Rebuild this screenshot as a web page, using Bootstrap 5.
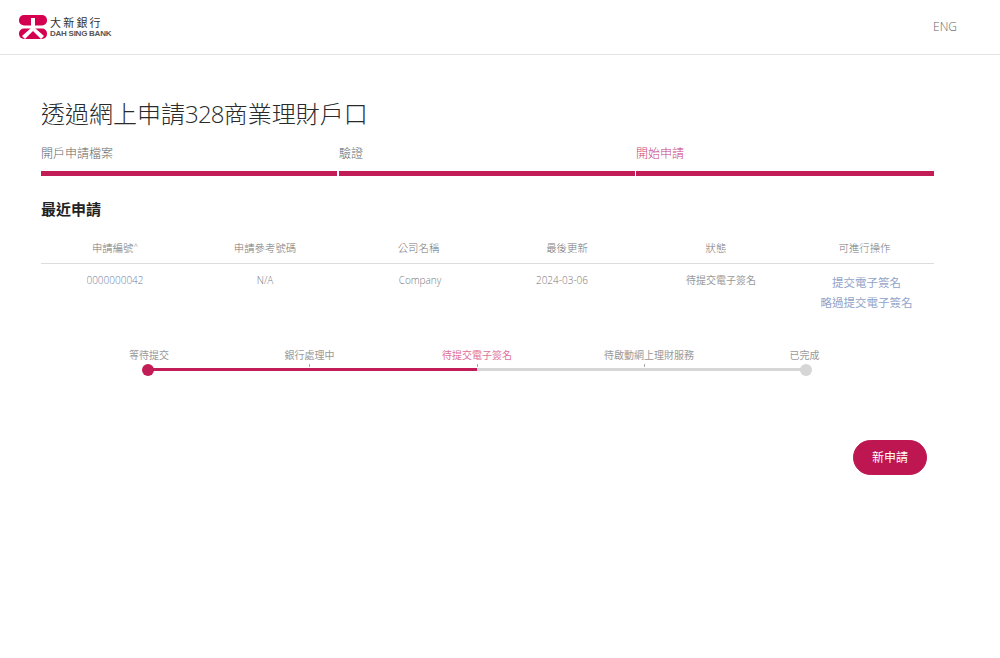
<!DOCTYPE html>
<html lang="zh-Hant">
<head>
<meta charset="utf-8">
<title>大新銀行</title>
<link href="https://cdn.jsdelivr.net/npm/bootstrap@5.3.0/dist/css/bootstrap.min.css" rel="stylesheet">
<style>
body{font-family:"Open Sans","Noto Sans CJK TC",sans-serif;font-weight:300;color:#333;background:#fff;min-height:658px}
.top-head{height:55px;border-bottom:1px solid #e3e3e3;padding:0 43px 0 19px}
.logo-txt{margin-left:3px;line-height:1}
.logo-zh{font-size:11px;letter-spacing:2.2px;color:#333;font-weight:400;line-height:13px}
.logo-en{font-family:"Liberation Sans",sans-serif;font-size:8px;font-weight:700;color:#555;line-height:10px;letter-spacing:-.25px}
.lang{font-size:12px;color:#666}
.page-wrap{padding:43px 66px 0 41px}
.page-title{font-size:24px;font-weight:300;color:#2a2a2a;line-height:32px;margin:0 0 15px}
.title-num{letter-spacing:-.8px}
.step-cell{font-size:12px;color:#666}
.step-a{flex:0 0 296px;margin-right:2px}
.step-b{flex:0 0 296px;margin-right:1px}
.step-c{flex:1 1 0}
.step-cell.is-on{color:#c9407a}
.step-lab{line-height:17px;margin-bottom:9px}
.step-bar{height:5px;background:#c21d57}
.recent{font-size:15px;font-weight:700;color:#222;line-height:20px;margin:23px 0 22px}
.app-table{table-layout:fixed;margin:0;font-size:10.4px;color:#777;--bs-table-color:#777;--bs-table-border-color:#ddd}
.app-table th{font-weight:300;padding:0 0 7px;text-align:center;vertical-align:top;border-bottom:1px solid #ddd;line-height:15px}
.app-table th.th-co{padding-right:3px}
.app-table th.th-st{padding-right:10px}
.app-table th.th-ac{padding-right:12px}
.app-table td{padding:6px 0 0;text-align:center;vertical-align:top;border:0;line-height:20px;font-size:10px}
.app-table td.dt-cell{padding-right:10px}
.app-table td.st-cell{color:#999;font-weight:400}
.app-table td.act-cell{padding:9px 8px 0 0;line-height:20px}
.act-link{display:block;font-size:11.5px;color:#8fa3c9;font-weight:400;text-decoration:none}
.sort-mark{font-size:8px;vertical-align:top;line-height:10px}
.app-table td.id-cell{color:#6f80a3}
.flow{width:746px;margin:35px 0 0 58px;height:40px}
.flow-labels{display:grid;grid-template-columns:100px 221px 114px 230px 81px;font-size:10px;color:#999;font-weight:400;line-height:14px;text-align:center}
.flow-labels .now{color:#e0709a}
.flow-track{height:3px;width:658px;background:#d6d6d6;margin:6px 0 0 49px;position:relative}
.flow-done{height:100%;width:50%;background:#c21d57}
.flow-dot{position:absolute;width:12px;height:12px;border-radius:50%;top:-4.5px}
.flow-dot.a{left:-6px;background:#c21d57}
.flow-dot.z{right:-6px;background:#d6d6d6}
.flow-tick{position:absolute;width:1px;height:3px;background:#aaa;top:-4px}
.new-btn{--bs-btn-bg:#bd1651;--bs-btn-hover-bg:#a81248;--bs-btn-color:#fff;--bs-btn-hover-color:#fff;--bs-btn-border-color:#bd1651;--bs-btn-hover-border-color:#a81248;--bs-btn-font-size:12px;--bs-btn-font-weight:400;width:74px;height:35px;padding:0}
.btn-row{margin-top:52px;padding-right:7px}
</style>
</head>
<body>
<header class="top-head d-flex align-items-center justify-content-between">
  <div class="d-flex align-items-center">
    <svg width="28" height="24" viewBox="0 0 28 24" aria-hidden="true">
      <rect x="0" y="0" width="28" height="10.5" rx="5" fill="#d4004f"/>
      <rect x="0" y="13.5" width="28" height="10.5" rx="5" fill="#d4004f"/>
      <path d="M12 3h4v10l9 8-3 3-8-8-8 8-3-3 9-8z" fill="#fff"/>
    </svg>
    <div class="logo-txt">
      <div class="logo-zh">大新銀行</div>
      <div class="logo-en">DAH SING BANK</div>
    </div>
  </div>
  <div class="lang">ENG</div>
</header>
<main class="page-wrap">
  <h1 class="page-title">透過網上申請<span class="title-num">328</span>商業理財戶口</h1>
  <div class="d-flex">
    <div class="step-cell step-a"><div class="step-lab">開戶申請檔案</div><div class="step-bar"></div></div>
    <div class="step-cell step-b"><div class="step-lab">驗證</div><div class="step-bar"></div></div>
    <div class="step-cell step-c is-on"><div class="step-lab">開始申請</div><div class="step-bar"></div></div>
  </div>
  <h2 class="recent">最近申請</h2>
  <table class="table app-table">
    <colgroup><col style="width:148px"><col style="width:152px"><col style="width:158px"><col style="width:136px"><col style="width:172px"><col></colgroup>
    <thead><tr><th>申請編號<span class="sort-mark">^</span></th><th>申請參考號碼</th><th class="th-co">公司名稱</th><th>最後更新</th><th class="th-st">狀態</th><th class="th-ac">可進行操作</th></tr></thead>
    <tbody><tr>
      <td class="id-cell">0000000042</td><td>N/A</td><td>Company</td><td class="dt-cell">2024-03-06</td><td class="st-cell">待提交電子簽名</td>
      <td class="act-cell"><a class="act-link" href="#">提交電子簽名</a><a class="act-link" href="#">略過提交電子簽名</a></td>
    </tr></tbody>
  </table>
  <div class="flow">
    <div class="flow-labels"><span>等待提交</span><span>銀行處理中</span><span class="now">待提交電子簽名</span><span>待啟動網上理財服務</span><span>已完成</span></div>
    <div class="flow-track">
      <div class="flow-done"></div>
      <span class="flow-dot a"></span><span class="flow-dot z"></span>
      <span class="flow-tick" style="left:24.5%"></span><span class="flow-tick" style="left:50%"></span><span class="flow-tick" style="left:75.4%"></span>
    </div>
  </div>
  <div class="btn-row d-flex justify-content-end"><button type="button" class="btn new-btn rounded-pill">新申請</button></div>
</main>
<script src="https://cdn.jsdelivr.net/npm/bootstrap@5.3.0/dist/js/bootstrap.bundle.min.js"></script>
</body>
</html>
